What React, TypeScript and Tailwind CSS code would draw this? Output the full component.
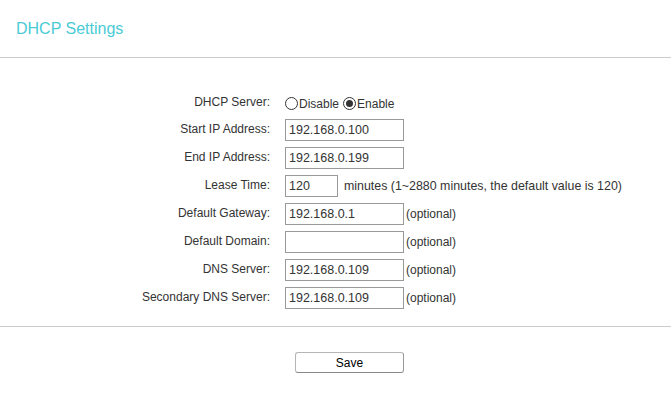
import React from "react";

const Fields = [
  { label: "Start IP Address:", value: "192.168.0.100", key: "start" },
  { label: "End IP Address:", value: "192.168.0.199", key: "end" },
];

const OptFields = [
  { label: "Default Gateway:", value: "192.168.0.1", key: "gw" },
  { label: "Default Domain:", value: "", key: "domain" },
  { label: "DNS Server:", value: "192.168.0.109", key: "dns" },
  { label: "Secondary DNS Server:", value: "192.168.0.109", key: "dns2" },
];

const Radio = ({ checked }: { checked?: boolean }) => (
  <span className="inline-flex items-center justify-center w-[13px] h-[13px] rounded-full border border-[#333] bg-white">
    {checked && <span className="block w-[7px] h-[7px] rounded-full bg-[#333]" />}
  </span>
);

const Row = ({ label, children, h = "h-[28px]" }: { label: string; children: React.ReactNode; h?: string }) => (
  <div className={`flex items-center ${h}`}>
    <div className="w-[270px] text-right pb-[3px]">{label}</div>
    <div className="ml-[15px] flex items-center">{children}</div>
  </div>
);

const TextBox = ({ value, w = "w-[119px]" }: { value: string; w?: string }) => (
  <input
    defaultValue={value}
    className={`${w} h-[22px] border border-[#999] px-[3px] text-[12.5px] text-[#333] outline-none`}
  />
);

const App = () => {
  return (
    <div className="w-[671px] h-[393px] bg-white font-['Liberation_Sans',Arial,sans-serif] text-[12px] text-[#333]">
      <div className="h-[58px] border-b border-[#ccc] pl-[16px] pt-[20px]">
        <div className="text-[16px] leading-[18px] text-[#4acbd6]">DHCP Settings</div>
      </div>
      <div className="pt-[33px] pb-[14px] border-b border-[#ccc]">
        <Row label="DHCP Server:" h="h-[25px]">
          <Radio />
          <span className="ml-px">Disable</span>
          <span className="ml-[4px]" />
          <Radio checked />
          <span className="ml-px">Enable</span>
        </Row>
        {Fields.map((f) => (
          <Row label={f.label} key={f.key}>
            <TextBox value={f.value} />
          </Row>
        ))}
        <Row label="Lease Time:">
          <TextBox value="120" w="w-[53px]" />
          <span className="ml-[6px] text-[12.4px]">minutes (1~2880 minutes, the default value is 120)</span>
        </Row>
        {OptFields.map((f) => (
          <Row label={f.label} key={f.key}>
            <TextBox value={f.value} />
            <span className="ml-[2px]">(optional)</span>
          </Row>
        ))}
      </div>
      <div className="pt-[25px] pl-[295px]">
        <button className="w-[109px] h-[21px] rounded-[3px] border border-[#b5b5b5] border-b-[#888] border-r-[#999] bg-white text-[12px] text-black">
          Save
        </button>
      </div>
    </div>
  );
};

export default App;
